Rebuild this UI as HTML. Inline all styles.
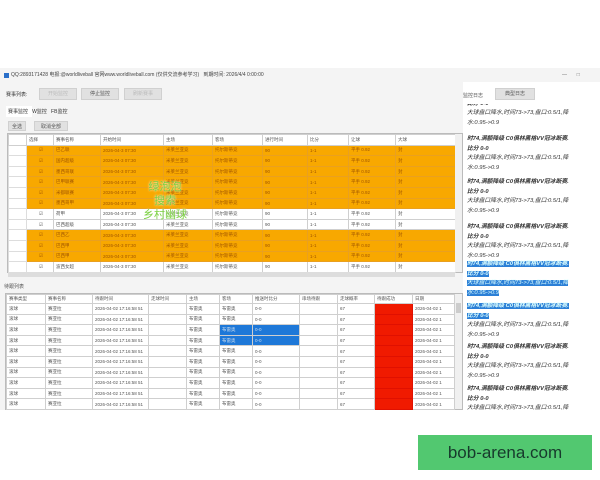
<!DOCTYPE html>
<html><head><meta charset="utf-8">
<style>
*{margin:0;padding:0;box-sizing:border-box}
body{width:600px;height:480px;background:#fff;position:relative;overflow:hidden;font-family:"Liberation Sans","Noto Sans CJK SC",sans-serif;color:#333}
.a{position:absolute}
.t{font-size:5px;white-space:nowrap;line-height:1}
.btn{position:absolute;background:#e1e1e1;border:1px solid #d0d0d0;font-size:5px;text-align:center;line-height:11px;color:#555}
table{border-collapse:collapse;table-layout:fixed;position:absolute}
td{border:1px solid #cfcfcf;font-size:4.5px;white-space:nowrap;overflow:hidden;padding-left:2px;color:#555;height:10.6px}
.o td{background:#f8a800;color:#a05500;border-color:#e9a020}
.log{position:absolute;left:4px;width:130px;font-size:5.8px;line-height:9.5px;color:#333;font-style:italic}
.log b{font-weight:bold}
.hl{background:#2b7fd6;color:#dff}
</style></head><body>
<div class="a" style="left:0;top:68px;width:600px;height:342px;background:#f4f4f4"></div>
<div class="a" style="left:4px;top:73px;width:5px;height:5px;background:#2a6fc9"></div>
<div class="a t" style="left:11px;top:73px;color:#444">QQ:2893171428 电报:@worldliveball 官网www.worldliveball.com (仅供交流参考学习)&nbsp;&nbsp; 到期时间: 2026/4/4 0:00:00</div>
<div class="a t" style="left:562px;top:73px;color:#666">—&nbsp;&nbsp;&nbsp;&nbsp;&nbsp;&nbsp;&nbsp;□</div>
<div class="a t" style="left:6px;top:93px">赛事列表:</div>
<div class="btn" style="left:39px;top:88px;width:38px;height:12px;color:#bbb">开始监控</div>
<div class="btn" style="left:81px;top:88px;width:38px;height:12px">停止监控</div>
<div class="btn" style="left:124px;top:88px;width:38px;height:12px;color:#bbb">刷新赛事</div>
<div class="a" style="left:6px;top:106px;width:26px;height:11px;background:#fff"></div>
<div class="a t" style="left:8px;top:110px">赛事监控&nbsp;&nbsp; W监控&nbsp;&nbsp; FB监控</div>
<div class="btn" style="left:8px;top:121px;width:18px;height:10px;line-height:10px">全选</div>
<div class="btn" style="left:34px;top:121px;width:34px;height:10px;line-height:10px">取消全部</div>
<div class="a" style="left:7px;top:133px;width:456px;height:140px;background:#fff;border:1px solid #bbb"></div>
<table id="t1" style="left:8px;top:134px;width:447px"></table>
<div class="a" style="left:455px;top:134px;width:7px;height:138px;background:#f0f0f0"></div>
<div class="a" style="left:8px;top:272px;width:447px;height:5px;background:#ddd"></div>
<div class="a t" style="left:4px;top:285px;color:#555">待跟列表</div>
<div class="a" style="left:5px;top:293px;width:458px;height:117px;background:#fff;border:1px solid #bbb"></div>
<table id="t2" style="left:6px;top:294px;width:448px"></table>
<div class="a" style="left:455px;top:294px;width:7px;height:115px;background:#f0f0f0"></div>
<div class="a" style="left:456px;top:303px;width:5px;height:10px;background:#ccc"></div>
<div class="a" style="left:140px;top:180px;font-size:11px;color:#7ad040;line-height:14px;text-align:center;width:50px;text-shadow:0 0 2px #fff">绿泡泡<br>搜索<br>乡村幽球</div>
<div class="a" style="left:463px;top:82px;width:137px;height:328px;background:#fff"></div>
<div class="a t" style="left:463px;top:94px;color:#555">监控日志</div>
<div class="btn" style="left:495px;top:88px;width:40px;height:12px">典型日志</div>
<div id="lg" class="a" style="left:463px;top:104px;width:137px;height:306px;overflow:hidden"></div>
<div class="a" style="left:418px;top:435px;width:174px;height:35px;background:#52c870"></div>
<div class="a" style="left:418px;top:435px;width:174px;height:35px;line-height:35px;text-align:center;font-size:17px;color:#173a2c">bob-arena.com</div>
<script>
var w1=[18,27,47,63,49,50,45,41,47,60];
var h1=['','选择','赛事名称','开始时间','主场','客场','进行时间','比分','让球','大球'];
var o=[1,1,1,1,1,1,0,0,1,1,1,0];
var nm=['巴乙联','国内超级','墨西哥联','巴甲联赛','米都联赛','墨西哥甲','荷甲','巴西超级','巴西乙','巴西甲','巴西甲','波西女超'];
var s='<tr>'+w1.map(function(w,i){return '<td style="width:'+w+'px;background:#fff;color:#555">'+h1[i]+'</td>'}).join('')+'</tr>';
for(var i=0;i<12;i++){s+='<tr class="'+(o[i]?'o':'')+'"><td style="background:#fff;border-color:#ddd"></td><td style="text-align:center">☑</td><td>'+nm[i]+'</td><td>2026-04-3 07:30</td><td>米莱兰亚竞</td><td>托尔斯蒂竞</td><td>90</td><td>1-1</td><td>平手 0.92</td><td>封</td></tr>'}
document.getElementById('t1').innerHTML=s;
var w2=[39,47,56,38,33,33,47,38,37,38,42];
var h2=['赛事类型','赛事名称','待跟时间','走球时间','主场','客场','推送时比分','串场待跟','走球概率','待跟成功','日期'];
s='<tr>'+w2.map(function(w,i){return '<td style="width:'+w+'px;height:9px">'+h2[i]+'</td>'}).join('')+'</tr>';
for(var i=0;i<10;i++){s+='<tr>';for(var j=0;j<11;j++){var st='',tx=['滚球','赛亚拉','2026-04-02 17:16:58 51','','布雷奥','布雷奥','0-0','','67','','2026-04-02 1'][j];if(j==9)st='background:#f01a00;border-color:#e01000';if((i==2||i==3)&&(j==5||j==6))st='background:#1e78d8;color:#cde';s+='<td style="'+st+'">'+tx+'</td>'}s+='</tr>'}
document.getElementById('t2').innerHTML=s;
var L='',ys=[-14,31,74,119,156,198,239,281];
for(var k=0;k<ys.length;k++){var hl=(k==4||k==5);L+='<div class="log" style="top:'+ys[k]+'px"><b>'+(hl?'<span class="hl">':'')+'时74,满额降级 C0俱林黑格VV冠冰断赛.<br>比分 0-0'+(hl?'</span>':'')+'</b><br>'+(hl&&k==4?'<span class="hl">':'')+'大球盘口降水,时间73->73,盘口:0.5/1,降<br>水:0.95->0.9'+(hl&&k==4?'</span>':'')+'</div>'}
document.getElementById('lg').innerHTML=L;
</script>
</body></html>
